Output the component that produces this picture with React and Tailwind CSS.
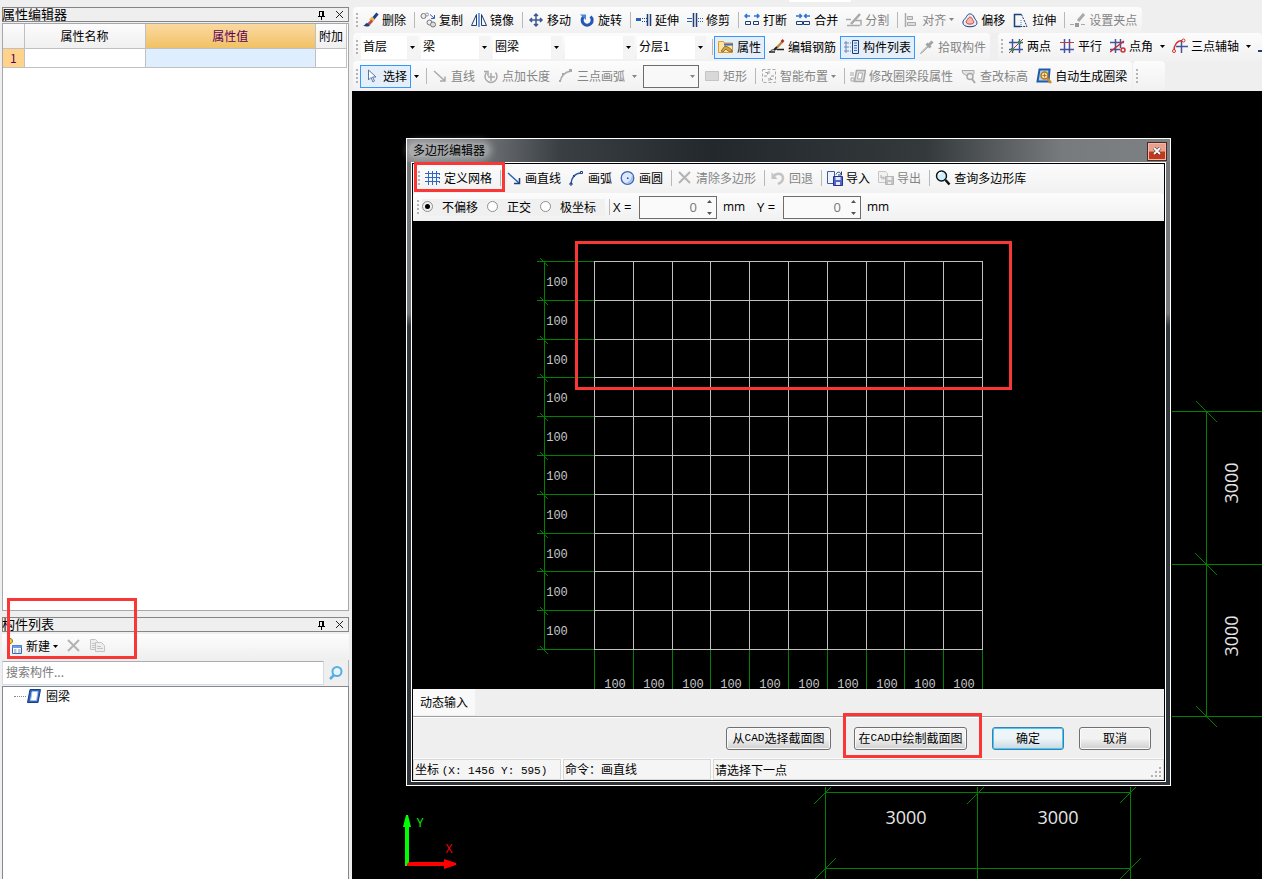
import React from 'react';
import clsx from 'clsx';

const NAVY = '#1f3f77';
const GRAY = '#a9a9a9';

// 16x16 toolbar glyphs
const icons = {
  brush: (
    <>
      <path d="M14.5 1.5l-5 6" stroke="#1f3f8f" strokeWidth="3" />
      <path d="M10.5 6l-3 3" stroke="#e9b64c" strokeWidth="4" />
      <path d="M8.500 7.500L4 11.500l3 1.500 3-3.500z" fill="#c04a4a" />
      <path d="M0 13.500c2 0 2-2 4-2.500l3 2c-1 2-4 2-7 .5z" fill={NAVY} />
    </>
  ),
  copy: (
    <>
      <circle cx="3.500" cy="4" r="2.500" fill="#eee" stroke="#777" />
      <circle cx="7" cy="2.500" r="1.500" stroke="#999" />
      <circle cx="9.500" cy="10.500" r="2.500" fill="#eee" stroke="#777" />
      <circle cx="13" cy="12.500" r="2.500" fill="#ddd" stroke="#777" />
      <path d="M10 2.500l4 3.500M14.500 3v3.500H11" stroke="#2a62b8" />
    </>
  ),
  mirror: (
    <>
      <path d="M5.500 2.500v11h-5zM10.500 2.500v11h5z" stroke={NAVY} />
      <path d="M8 1v14" stroke="#4b7fd0" strokeWidth="1.500" />
    </>
  ),
  move: (
    <path d="M8 2v12M2 8h12M6 4L8 2l2 2M6 12l2 2 2-2M4 6L2 8l2 2M12 6l2 2-2 2" stroke="#3b5a92" strokeWidth="1.500" />
  ),
  rotate: (
    <>
      <path d="M11.500 4.500a5 5 0 1 1-7 .3" stroke="#2457b5" strokeWidth="3" />
      <path d="M1 2.500h6v5.500z" fill="#4b86dd" />
    </>
  ),
  extend: (
    <>
      <path d="M0 7.500h5" stroke="#2a62b8" strokeWidth="3" />
      <path d="M6 6.500h5M6 9.500h5" stroke={NAVY} strokeDasharray="1 1" />
      <path d="M11.500 2v12M14.500 2v12" stroke={NAVY} strokeWidth="1.500" />
    </>
  ),
  trim: (
    <>
      <path d="M0 6.500h5M0 9.500h5" stroke="#2a62b8" />
      <path d="M6.500 1v14M9.500 1v14" stroke={NAVY} strokeWidth="1.500" />
      <path d="M11 6.500h5M11 9.500h5" stroke="#2a62b8" strokeDasharray="1 1" />
    </>
  ),
  breakLine: (
    <>
      <path d="M1 4h5M10 4h5M3 2L1 4l2 2M13 2l2 2-2 2" stroke="#2a72d8" strokeWidth="1.500" />
      <path d="M1.500 9.500h5v3h-5zM9.500 9.500h5v3h-5z" stroke={NAVY} />
    </>
  ),
  merge: (
    <>
      <path d="M1 4h5M10 4h5M4.500 2l2 2-2 2M11.500 2l-2 2 2 2" stroke="#2a72d8" strokeWidth="1.500" />
      <path d="M1.500 9.500h6v3h-6zM8.500 9.500h6v3h-6z" stroke={NAVY} />
    </>
  ),
  split: (
    <>
      <path d="M0 7.500h5M1 13.500h13M9 8.500h6v5" stroke={GRAY} strokeWidth="1.500" />
      <path d="M14 2L5 12" stroke={GRAY} strokeWidth="2.500" />
    </>
  ),
  align: (
    <>
      <path d="M2.500 1v14" stroke={GRAY} strokeWidth="1.500" />
      <path d="M4.500 4.500h5v3h-5zM4.500 10.500h8v3h-8z" fill="#ddd" stroke={GRAY} />
    </>
  ),
  offset: (
    <>
      <path d="M1.500 12.500c-2-4 1.500-5 3-8 2-4 6-3 7.500.5 1 3 4 4 2.500 7.500-2 3-11 3-13 0z" fill="#e7eefb" stroke={NAVY} />
      <path d="M4.500 11c-1-2.500 1-3 2-5 1-1.500 3-1 3.500.5.500 2 2.500 2.500 1.500 4.500-1 1.500-6 1.500-7 0z" fill="#f7b9ae" stroke="#d0453a" />
    </>
  ),
  stretch: (
    <>
      <path d="M8.500 2.500h-7v12h6" stroke={NAVY} strokeWidth="1.500" />
      <path d="M8.500 2.500l5.500 12H7" stroke={NAVY} strokeDasharray="2 1" />
      <path d="M8 8v5" stroke="#3c7fe0" strokeDasharray="1 1" />
    </>
  ),
  grips: (
    <>
      <path d="M0 12.500h4M11 12.500h4" stroke={GRAY} />
      <path d="M14 2L8 9" stroke={GRAY} strokeWidth="3" />
      <path d="M5 11h4v4H5z" fill="#999" />
    </>
  ),
  props: (
    <>
      <path d="M.5 2.500h5l1 1.500h8v9.500H.5z" fill="#fbe3a6" stroke="#e09a2c" />
      <path d="M6 4.500h9v2H6z" fill="#3d6db7" />
      <path d="M3 12l4-5 3 1 4 3v2l-4-1-2-2-3 3z" fill="#d9a23b" stroke="#6b5120" strokeWidth=".7" />
    </>
  ),
  rebar: (
    <>
      <path d="M0 13h6M8 10.500h7" stroke="#222" strokeWidth="1.500" />
      <path d="M1 13c2-4 5-1 7-3" stroke="#222" />
      <path d="M14 2L8 8.500" stroke="#b98a3a" strokeWidth="2.500" />
      <path d="M14.500 1l-2 2" stroke="#b42b2b" strokeWidth="2.500" />
      <path d="M8 8l-3 3" stroke="#222" strokeWidth="2" />
    </>
  ),
  list: (
    <>
      <path d="M1 3h2v2H1zM1 7h2v2H1zM1 11h2v2H1z" stroke="#6d87b5" />
      <path d="M4 4h3M4 8h3M4 12h3" stroke="#6d87b5" strokeDasharray="1 1" />
      <path d="M8.500 1.500h6v13h-6z" fill="#dfe9fa" stroke={NAVY} />
      <path d="M10 4h3M10 6.500h3M10 9h3M10 11.500h3" stroke="#3b6fc4" />
    </>
  ),
  picker: (
    <>
      <path d="M9 6.500L3 12.500l-1.500 2 2-1 6-6z" fill="#e4e4e4" stroke={GRAY} />
      <path d="M7.500 4.500l4 4M9.500 6.500l4-4" stroke="#a3a3a3" strokeWidth="3" />
    </>
  ),
  twoPoint: (
    <>
      <path d="M4.500 1v14M11.500 1v14M1 4.500h14M1 11.500h14" stroke="#44549a" strokeWidth="1.500" />
      <path d="M1 15L15 1" stroke="#b03636" />
      <path d="M3 10h3v3H3zM10 3h3v3h-3z" fill="#3d8a3d" />
    </>
  ),
  parallel: (
    <>
      <path d="M5.500 1v14M10.500 1v14M1 11.500h14" stroke="#44549a" strokeWidth="1.500" />
      <path d="M1 4.500h14" stroke="#c83c3c" />
    </>
  ),
  pointAngle: (
    <>
      <path d="M5.500 1v14M10.500 1v9M0 4.500h14M0 11.500h10" stroke="#44549a" strokeWidth="1.500" />
      <path d="M0 14L14 3" stroke="#d02c2c" strokeWidth="1.500" />
      <circle cx="13" cy="12" r="2" stroke="#d02c2c" strokeWidth="1.500" />
    </>
  ),
  threePoint: (
    <>
      <path d="M9.500 2v13M4 8.500h12" stroke="#44549a" strokeWidth="1.500" />
      <path d="M2 13C2 7 5 2.500 11 2.500" stroke="#d02c2c" strokeWidth="1.500" />
      <circle cx="2" cy="13" r="1.500" fill="#fff" stroke="#d02c2c" />
      <circle cx="11.500" cy="2.500" r="1.500" fill="#fff" stroke="#d02c2c" />
    </>
  ),
  axis: <path d="M0 13h5V8" stroke={NAVY} strokeWidth="2" />,
  cursor: <path d="M4.500 2v10l2.500-2.500L9 14l1.500-1L8.500 9H12z" fill="#fff" stroke="#5c76a5" />,
  line: <path d="M2 3l11 10M13 8.500V13H8" stroke={GRAY} strokeWidth="1.500" />,
  pointLength: (
    <>
      <path d="M3.500 4.500a6 6 0 1 0 9 0" stroke={GRAY} strokeWidth="1.500" />
      <path d="M8 5v8M5 9h7M1 3.500h4V8" stroke={GRAY} strokeWidth="1.500" />
    </>
  ),
  arcGray: (
    <>
      <path d="M2 14C3 8 7 4 13 3" stroke={GRAY} strokeWidth="1.500" />
      <path d="M11 1h3v3h-3zM4 5h2v2H4zM1 12h2v2H1z" fill={GRAY} />
    </>
  ),
  rect: <path d="M1.500 3.500h13v9h-13z" fill="#d8d8d8" stroke="#c4c4c4" />,
  smart: (
    <>
      <path d="M1.500 1.500h13v13h-13z" stroke={GRAY} strokeDasharray="3 2" />
      <path d="M8 3v3M8 10v3M3 8h3M10 8h3M4.500 4.500h2v2M11.500 11.500h-2v-2" stroke="#999" />
    </>
  ),
  modify: (
    <>
      <path d="M6.500 2.500h9l-2 11h-9z" fill="#e4e4e4" stroke={GRAY} strokeWidth="1.500" />
      <path d="M8.500 5h4l-1 6h-4z" fill="#fff" stroke={GRAY} />
      <path d="M1 4v4M3 4v4M1 10h3v3H1z" stroke={GRAY} />
    </>
  ),
  elevation: (
    <>
      <path d="M1 2.500h12v3l-4 4-7-4z" fill="#e4e4e4" stroke={GRAY} />
      <circle cx="9" cy="8.500" r="3" fill="#f1f1f1" stroke={GRAY} strokeWidth="1.500" />
      <path d="M11 11l3 4" stroke={GRAY} strokeWidth="2" />
    </>
  ),
  auto: (
    <>
      <path d="M3.500 1.500h10l-1 12h-11z" fill="#aed3f5" stroke="#1f5ca8" strokeWidth="2" />
      <circle cx="8.500" cy="7.500" r="3.500" fill="#f9e4b5" stroke="#b9761b" strokeWidth="1.500" />
      <path d="M8.500 5.500v4M6.500 7.500h4" stroke="#b9761b" />
      <path d="M11 10l4 5" stroke="#c98a2c" strokeWidth="2.500" />
    </>
  ),
  grid: (
    <path d="M3.500 1v14M7.500 1v14M11.500 1v14M0 3.500h15M0 7.500h15M0 11.500h15M14.500 3v2M14.500 7v2M14.500 11v2" stroke="#2e66c2" />
  ),
  lineBlue: (
    <>
      <path d="M2 3l11 10" stroke="#2a62b8" strokeWidth="1.500" />
      <path d="M13.500 8v5.500H8" stroke={NAVY} strokeWidth="1.500" />
    </>
  ),
  arcBlue: (
    <>
      <path d="M2 14C2 8 6 3 12 3" stroke="#2e55a8" strokeWidth="1.500" />
      <path d="M11.500 1.500h2v2h-2z" fill="#fff" stroke={NAVY} />
      <path d="M4 5l2 2M1 13h2v2H1z" stroke={NAVY} />
    </>
  ),
  circle: (
    <>
      <circle cx="7.500" cy="8" r="6.300" fill="#dbe8fd" stroke="#3f63b5" strokeWidth="1.300" />
      <path d="M12 4a6 6 0 0 1-7 9c4 0 7-4 7-9z" fill="#9dbcf3" />
      <path d="M7 7.500h1.500V9H7z" fill={NAVY} />
    </>
  ),
  cross: <path d="M2 2l11 11M13 2L2 13" stroke="#b3b3b3" strokeWidth="2" />,
  undo: (
    <>
      <path d="M4 5.500c4-3.500 9-1.500 9 2.500s-3 5-5 6" stroke="#c4c4c4" strokeWidth="2.500" />
      <path d="M1.500 2v7h6z" fill="#c4c4c4" />
    </>
  ),
  importFile: (
    <>
      <path d="M.5 1.500h7v12h-7z" fill="#eef3fc" stroke="#3b60a8" />
      <path d="M6.500 6.500h9v9h-9z" fill="#5566c8" stroke="#23338a" />
      <path d="M8.500 7h5v3h-5zM9 12h4v3H9z" fill="#e6ebfb" />
      <path d="M9 4.500c1-3 4-3 5-.5M14.500 1.500V5H11" stroke={NAVY} />
    </>
  ),
  exportFile: (
    <>
      <path d="M.5 1.500h7l2 2v9h-9z" fill="#f1f1f1" stroke="#c6c6c6" />
      <path d="M7.500 6.500h8v8h-8z" fill="#c3c3c3" stroke="#b4b4b4" />
      <path d="M9.500 7h4v3h-4zM10 12h3v2h-3z" fill="#eee" />
      <path d="M3 5v3h3M5 6.500L6.500 8 5 9.500" stroke={GRAY} />
    </>
  ),
  search: (
    <>
      <circle cx="6.500" cy="6" r="5" fill="#cdefff" stroke="#111" strokeWidth="1.400" />
      <path d="M4 5c0-2 2-2.500 3-2.500" stroke="#fff" strokeWidth="1.500" />
      <path d="M10.500 10l4 4.500" stroke="#111" strokeWidth="2.500" />
    </>
  ),
  searchBlue: (
    <>
      <circle cx="9" cy="6.500" r="4.500" fill="#e8f5fd" stroke="#55aee8" strokeWidth="2" />
      <path d="M6 10l-4 4" stroke="#55aee8" strokeWidth="2.500" />
    </>
  ),
  create: (
    <>
      <path d="M3 0v6M0 3h6" stroke="#a2860f" strokeWidth="3" />
      <path d="M3 1v4M1 3h4" stroke="#f4d638" strokeWidth="1.500" />
      <path d="M5.500 7.500h9v8h-9z" fill="#fff" stroke="#3b64ae" />
      <path d="M5.500 7.500h9V10h-9z" fill="#6f9be6" />
      <path d="M7 12h2.500M11 12h2.500M7 14h2.500M11 14h2.500" stroke="#6f86b5" />
    </>
  ),
  pages: (
    <>
      <path d="M1.500 1.500h5l2 2v8h-7zM3 5.500h3M3 7.500h3M3 9.500h3" fill="#eee" stroke="#c4c4c4" />
      <path d="M6.500 4.500h6l3 3v6h-9zM8 8.500h4M8 10.500h6" fill="#eee" stroke="#c4c4c4" />
    </>
  ),
  beam: (
    <>
      <path d="M4 1.500h10.500l-2.500 13H1.500z" fill="#2f62b9" stroke="#173f87" />
      <path d="M6 3.500h6l-1.500 9H4.500z" fill="#fff" stroke="#9dbdf0" />
    </>
  ),
};

const Icon = ({ name }) => (
  <svg viewBox="0 0 16 16" fill="none" className="h-4 w-4 shrink-0" aria-hidden="true">
    {icons[name]}
  </svg>
);

const Caret = () => (
  <svg viewBox="0 0 5 3" className="h-[3px] w-[5px] shrink-0" aria-hidden="true">
    <path d="M0 0h5L2.500 3z" fill="currentColor" />
  </svg>
);

const Grip = () => (
  <div className="mr-px ml-[3px] flex shrink-0 flex-col gap-[2px]">
    <i className="h-[2px] w-[2px] bg-[#b4b4b4]" />
    <i className="h-[2px] w-[2px] bg-[#b4b4b4]" />
    <i className="h-[2px] w-[2px] bg-[#b4b4b4]" />
    <i className="h-[2px] w-[2px] bg-[#b4b4b4]" />
  </div>
);

const Separator = () => <div className="mr-px ml-1 h-4 w-px shrink-0 bg-[#b8b8b8]" />;

// Toolbar button, optionally pressed, greyed out or with a drop-down caret
const Tool = ({ icon, label, active, disabled, caret }) => (
  <button
    type="button"
    disabled={disabled}
    className={clsx(
      'flex h-[23px] shrink-0 items-center border px-[3px] whitespace-nowrap',
      active ? 'border-[#3399ff] bg-[#e5effa]' : 'border-transparent',
      disabled && 'text-[#858585]'
    )}
  >
    <Icon name={icon} />
    <span className="ml-[3px]">{label}</span>
    {caret && <span className="ml-[3px]"><Caret /></span>}
  </button>
);

const CaretButton = ({ label, disabled }) => (
  <button
    type="button"
    aria-label={label}
    disabled={disabled}
    className={clsx('flex h-[23px] w-[11px] shrink-0 items-center justify-center', disabled && 'text-[#858585]')}
  >
    <Caret />
  </button>
);

const Combo = ({ label, value, className }) => (
  <label className={clsx('relative flex shrink-0 items-center', className)}>
    <select aria-label={label} className="h-[23px] w-full appearance-none bg-white pb-[2px] pl-[2px]">
      <option>{value}</option>
    </select>
    <span className="pointer-events-none absolute right-0 flex h-[23px] w-[11px] items-center justify-center bg-[#f4f4f4]">
      <Caret />
    </span>
  </label>
);

const Bar = ({ className, children }) => (
  <div className={clsx('flex items-center rounded-sm bg-linear-to-b from-[#fcfcfc] to-[#f1f1f1]', className)}>
    {children}
  </div>
);

const MainToolbars = () => (
  <header className="overflow-hidden pl-px">
    <div className="h-[7px]">
      <div className="ml-[436px] h-[2px] w-[62px] bg-white" />
    </div>
    <div className="flex h-[26px]">
      <Bar className="pr-px pb-px">
        <Grip />
        <Tool icon="brush" label="删除" />
        <Separator />
        <Tool icon="copy" label="复制" />
        <Tool icon="mirror" label="镜像" />
        <Separator />
        <Tool icon="move" label="移动" />
        <Tool icon="rotate" label="旋转" />
        <Separator />
        <Tool icon="extend" label="延伸" />
        <Tool icon="trim" label="修剪" />
        <Separator />
        <Tool icon="breakLine" label="打断" />
        <Tool icon="merge" label="合并" />
        <Tool icon="split" label="分割" disabled />
        <Separator />
        <Tool icon="align" label="对齐" disabled caret />
        <Tool icon="offset" label="偏移" />
        <Tool icon="stretch" label="拉伸" />
        <Separator />
        <Tool icon="grips" label="设置夹点" disabled />
      </Bar>
    </div>
    <div className="flex h-[28px] gap-2">
      <Bar>
        <Grip />
        <div className="mr-[2px] ml-[2px] flex gap-[3px]">
          <Combo label="楼层" value="首层" className="w-[57px]" />
          <Combo label="构件类别" value="梁" className="w-[69px]" />
          <Combo label="构件类型" value="圈梁" className="w-[69px]" />
          <Combo label="构件" value="" className="w-[69px]" />
          <Combo label="分层" value="分层1" className="w-[69px]" />
        </div>
        <Separator />
        <Tool icon="props" label="属性" active />
        <Tool icon="rebar" label="编辑钢筋" />
        <Tool icon="list" label="构件列表" active />
        <Tool icon="picker" label="拾取构件" disabled />
      </Bar>
      <Bar className="flex-1 overflow-hidden pb-[2px]">
        <Grip />
        <Tool icon="twoPoint" label="两点" />
        <Tool icon="parallel" label="平行" />
        <Tool icon="pointAngle" label="点角" />
        <CaretButton label="点角选项" />
        <Tool icon="threePoint" label="三点辅轴" />
        <CaretButton label="三点辅轴选项" />
        <Tool icon="axis" label="" />
      </Bar>
    </div>
    <div className="flex h-[30px]">
      <Bar className="pr-px">
        <Grip />
        <div className="ml-px flex">
          <Tool icon="cursor" label="选择" active />
        </div>
        <CaretButton label="选择选项" />
        <Separator />
        <Tool icon="line" label="直线" disabled />
        <Tool icon="pointLength" label="点加长度" disabled />
        <Tool icon="arcGray" label="三点画弧" disabled />
        <CaretButton label="三点画弧选项" disabled />
        <label className="relative mr-px ml-[3px] flex w-[56px] items-center text-[#858585]">
          <select aria-label="绘制方式" disabled className="h-[23px] w-full appearance-none border border-[#6d6d6d] bg-[#f8f8f8]" />
          <span className="pointer-events-none absolute right-1"><Caret /></span>
        </label>
        <Tool icon="rect" label="矩形" disabled />
        <Separator />
        <Tool icon="smart" label="智能布置" disabled caret />
        <Separator />
        <Tool icon="modify" label="修改圈梁段属性" disabled />
        <Tool icon="elevation" label="查改标高" disabled />
        <Tool icon="auto" label="自动生成圈梁" />
      </Bar>
      <Bar className="ml-px w-[32px]">
        <Grip />
      </Bar>
    </div>
  </header>
);

const PanelTitle = ({ children }) => (
  <div className="flex h-[15px] items-center justify-between border border-[#858585] bg-[#efefef] pr-1">
    <h2 className="-ml-px pb-[2px] text-[13px] leading-[13px]">{children}</h2>
    <div className="flex items-center gap-[9px]">
      <button type="button" aria-label="固定">
        <svg viewBox="0 0 9 10" className="h-[10px] w-[9px]" fill="none" shapeRendering="crispEdges">
          <path d="M2.500 1v5M2 1.500h4M1 6.500h7M4.500 7v3" stroke="#000" />
          <path d="M5 1h2v5H5z" fill="#000" />
        </svg>
      </button>
      <button type="button" aria-label="关闭">
        <svg viewBox="0 0 9 9" className="h-[9px] w-[9px]" fill="none">
          <path d="M1 1l7 7M8 1L1 8" stroke="#222" />
        </svg>
      </button>
    </div>
  </div>
);

const Highlight = ({ className }) => (
  <div className={clsx('pointer-events-none absolute border-3 border-[#fa3737]', className)} />
);

const PropertyEditor = () => (
  <section className="flex flex-1 flex-col">
    <PanelTitle>属性编辑器</PanelTitle>
    <div className="mt-px flex-1 border border-[#a5a8ad] bg-white pr-px">
      <table className="w-full table-fixed border-collapse text-center">
        <colgroup>
          <col className="w-[21px]" />
          <col className="w-[121px]" />
          <col />
          <col className="w-[31px]" />
        </colgroup>
        <thead>
          <tr className="h-6 bg-linear-to-b from-[#fcfcfc] to-[#f0f0f0]">
            <th aria-label="序号" className="border-r border-b border-[#c0c0c0]" />
            <th className="border-r border-b border-[#c0c0c0] font-normal">属性名称</th>
            <th className="border-r border-b border-[#c0c0c0] bg-linear-to-b from-[#fad9a0] to-[#f1c163] font-normal text-[#5c005c]">属性值</th>
            <th className="border-r border-b border-[#c0c0c0] font-normal whitespace-nowrap">附加</th>
          </tr>
        </thead>
        <tbody>
          <tr className="h-[19px]">
            <td className="border-r border-b border-[#c0c0c0] bg-[#ffd48a] leading-[14px] text-[#5c005c]">1</td>
            <td className="border-r border-b border-[#c0c0c0]" />
            <td className="border-r border-b border-[#c0c0c0] bg-[#dfeefe]" />
            <td className="border-r border-b border-[#c0c0c0]" />
          </tr>
        </tbody>
      </table>
    </div>
  </section>
);

const ComponentList = () => (
  <section className="relative mt-[6px] flex h-[262px] flex-col">
    <PanelTitle>构件列表</PanelTitle>
    <div className="mt-[2px] flex h-[26px] items-center bg-linear-to-b from-[#fdfdfd] to-[#efefef] pb-[2px] pl-px">
      <Tool icon="create" label="新建" caret />
      <button type="button" aria-label="删除" disabled className="px-1"><Icon name="cross" /></button>
      <button type="button" aria-label="复制" disabled className="px-[3px]"><Icon name="pages" /></button>
    </div>
    <div className="flex h-[26px] items-center border-r border-[#b5b5b5]">
      <input
        aria-label="搜索构件"
        placeholder="搜索构件..."
        className="h-6 min-w-0 flex-1 border border-[#d5dce4] border-t-[#a9adb3] bg-white pb-1 pl-[3px] placeholder:text-[#7a7a7a]"
      />
      <button type="button" aria-label="搜索" className="flex h-6 w-6 items-center justify-center"><Icon name="searchBlue" /></button>
    </div>
    <ul className="flex-1 border border-b-0 border-[#828790] bg-white">
      <li className="flex h-[18px] items-center pl-[11px]">
        <span className="w-3 border-t border-dotted border-[#888]" />
        <Icon name="beam" />
        <span className="ml-1">圈梁</span>
      </li>
    </ul>
    <Highlight className="top-[-19px] left-[5px] h-[61px] w-[130px]" />
  </section>
);

const DimensionText = ({ x, y, vertical }) => (
  <text
    x={x}
    y={y}
    transform={vertical ? `rotate(-90 ${x} ${y})` : undefined}
    textAnchor="middle"
    dominantBaseline="central"
    className="fill-[#e6e6e6] font-['Open_Sans',sans-serif] text-[18px]"
  >
    3000
  </text>
);

// Model space behind the dialog: axis dimensions and the UCS marker
const ModelSpace = () => (
  <svg className="absolute inset-0 h-full w-full" aria-label="绘图区">
    <g transform="translate(-352 -91)">
      <g stroke="#008000" fill="none" shapeRendering="crispEdges">
        <path d="M1172 411.500h2000M1172 564.500h2000M1172 716.500h2000M1206.500 411v306" />
        <path d="M1196 401l21 21M1195 553l22 22M1196 706l21 21" />
        <path d="M825.500 787v200M977.500 787v200M1130.500 787v200M825 792.500h306M825 868.500h306" />
        <path d="M831 787l-17 17M984 787l-17 17M1136 787l-16 16M836 858l-21 21M1141 858l-21 21" />
      </g>
      <DimensionText x={1231} y={483} vertical />
      <DimensionText x={1231} y={636} vertical />
      <DimensionText x={906} y={817} />
      <DimensionText x={1058} y={817} />
      <path d="M405 866v-39h-2l3-12h2l3 12h-2v39z" fill="#00ff00" />
      <path d="M409 862h35v-3l12 4v2l-12 4v-3h-37v-2z" fill="#ff0000" />
      <text x="420" y="827" textAnchor="middle" className="fill-[#00ff00] font-['Open_Sans',sans-serif] text-[12px]">Y</text>
      <text x="449" y="853" textAnchor="middle" className="fill-[#ff0000] font-['Open_Sans',sans-serif] text-[12px]">X</text>
    </g>
  </svg>
);

const STEPS = Array.from({ length: 11 }, (_, i) => Math.round(i * 38.8));

// 10 x 10 section grid with 100mm dimensions along the left and bottom
const SectionGrid = () => (
  <div className="bg-black">
    <svg className="block h-[468px] w-full overflow-visible" aria-label="多边形画布">
      <g transform="translate(181 41)">
        <g shapeRendering="crispEdges" fill="none">
          <g stroke="#008000">
            {STEPS.map((s) => (
              <path key={s} d={`M-57 ${s - 0.5}H0M${s + 0.5} 388V427M-54 ${s - 4}l8 8`} />
            ))}
            <path d="M-49.500 0V388" />
          </g>
          {STEPS.map((s) => (
            <path key={s} d={`M0 ${s - 0.5}H389M${s + 0.5} 0V388`} stroke="#c0c0c0" />
          ))}
        </g>
        <g className="fill-[#c8c8c8] font-['Liberation_Mono',monospace] text-[12px]" textAnchor="middle">
          {STEPS.slice(0, 10).map((s) => (
            <React.Fragment key={s}>
              <text x={-37} y={s + 24}>100</text>
              <text x={s + 21} y={426}>100</text>
            </React.Fragment>
          ))}
        </g>
        <rect x="-17.500" y="-19.500" width="434" height="146" fill="none" stroke="#fa3737" strokeWidth="3" />
      </g>
    </svg>
  </div>
);

const Radio = ({ label, defaultChecked }) => (
  <label className="flex items-center gap-[9px]">
    <input
      type="radio"
      name="offset"
      defaultChecked={defaultChecked}
      className="h-[11px] w-[11px] appearance-none rounded-full border border-[#8e8f8f] bg-white p-[2px] checked:bg-black checked:bg-clip-content"
    />
    {label}
  </label>
);

const OffsetField = ({ axis }) => (
  <label className="flex items-center font-['Open_Sans',sans-serif]">
    <span className="w-[26px] text-[13px]">{axis} =</span>
    <span className="flex h-[23px] w-[78px] items-center border border-[#6d6d6d] bg-[#fafafa] pr-1 text-[#777]">
      <input type="text" defaultValue="0" className="w-full min-w-0 pr-[10px] text-right text-[13px]" />
      <svg viewBox="0 0 5 15" className="h-[15px] w-[5px] shrink-0" aria-hidden="true">
        <path d="M0 3h5L2.500 0zM0 12h5l-2.500 3z" fill="#555" />
      </svg>
    </span>
    <span className="ml-[6px] w-[34px]">mm</span>
  </label>
);

const Mono = ({ children }) => (
  <span className="font-['Liberation_Mono',monospace] text-[11px]">{children}</span>
);

const DialogButton = ({ primary, className, children }) => (
  <button
    type="button"
    className={clsx(
      'flex h-[23px] items-center justify-center rounded-[3px] border bg-linear-to-b pb-px whitespace-nowrap',
      primary
        ? 'border-[#3c7fb1] from-[#eef5f8] from-50% to-[#c7d9e2] inset-ring inset-ring-[#48c8f4]'
        : 'border-[#707070] from-[#f2f2f2] from-50% to-[#cfcfcf] inset-ring inset-ring-[#fafafa]',
      className
    )}
  >
    {children}
  </button>
);

const PolygonDialog = () => (
  <div
    role="dialog"
    aria-labelledby="dialog-title"
    className="absolute top-[47px] left-[54px] w-[765px] border border-white bg-linear-to-b from-[#73777a] from-27% to-[#30353b] to-29%"
  >
    <div className="flex h-[23px] items-center justify-between bg-[linear-gradient(to_right,#85888b,#73777a_9%,#3a3f43_20%,#23282c_40%,#34393c_68%,#777b7e_86%,#7d8184)] pr-1 pl-[2px]">
      <h1 id="dialog-title" className="mb-[2px] rounded-full bg-white/30 px-1 leading-[14px] shadow-[0_0_6px_3px_rgba(255,255,255,0.3)]">多边形编辑器</h1>
      <button type="button" aria-label="关闭" className="mt-px flex h-[17px] w-[18px] items-center justify-center border border-[#f1b8a6] bg-linear-to-b from-[#e9a08c] from-45% to-[#c0391c] to-55% outline outline-[#4a2a24]">
        <svg viewBox="0 0 8 8" className="h-2 w-2" fill="none">
          <path d="M1 1l6 6M7 1L1 7" stroke="#333" strokeWidth="3" />
          <path d="M1 1l6 6M7 1L1 7" stroke="#fff" strokeWidth="1.800" />
        </svg>
      </button>
    </div>
    <div className="mx-1 mb-[3px] border border-white">
      <div className="border border-black bg-[#efefef]">
        <Bar className="relative h-[29px] pb-px">
          <div className="ml-[2px] flex items-center"><Grip /></div>
          <Tool icon="grid" label="定义网格" />
          <Separator />
          <Tool icon="lineBlue" label="画直线" />
          <Tool icon="arcBlue" label="画弧" />
          <Tool icon="circle" label="画圆" />
          <Separator />
          <Tool icon="cross" label="清除多边形" disabled />
          <Separator />
          <Tool icon="undo" label="回退" disabled />
          <Separator />
          <Tool icon="importFile" label="导入" />
          <Tool icon="exportFile" label="导出" disabled />
          <Separator />
          <Tool icon="search" label="查询多边形库" />
          <Highlight className="top-[-2px] left-px h-[30px] w-[91px]" />
        </Bar>
        <Bar className="h-[28px]">
          <div className="ml-px flex items-center"><Grip /></div>
          <fieldset className="ml-[2px] flex w-[183px] items-center gap-[9px] bg-[#f0f0f0] pb-px">
            <Radio label="不偏移" defaultChecked />
            <Radio label="正交" />
            <Radio label="极坐标" />
          </fieldset>
          <Separator />
          <div className="ml-[2px] flex">
            <OffsetField axis="X" />
            <OffsetField axis="Y" />
          </div>
        </Bar>
        <SectionGrid />
        <div className="h-[28px] border-b border-[#a0a0a0]">
          <button type="button" className="h-[26px] bg-[#f9f9f9] px-[7px]">动态输入</button>
        </div>
        <div className="flex h-[41px] items-center justify-end border-t border-white pr-[13px]">
          <DialogButton className="w-[105px]">从<Mono>CAD</Mono>选择截面图</DialogButton>
          <div className="relative mr-[25px] ml-[23px]">
            <DialogButton className="w-[113px]">在<Mono>CAD</Mono>中绘制截面图</DialogButton>
            <Highlight className="top-[-14px] left-[-11px] h-[45px] w-[139px]" />
          </div>
          <DialogButton primary className="mr-[15px] w-[72px]">确定</DialogButton>
          <DialogButton className="w-[72px]">取消</DialogButton>
        </div>
        <footer className="flex h-[22px] gap-[2px] bg-[#fafafa] pt-px">
          <div className="w-[148px] border border-[#d7d7d7] bg-[#f5f5f5] pl-px leading-[18px]">
            坐标 <Mono>(X: 1456 Y: 595)</Mono>
          </div>
          <div className="w-[148px] border border-[#d7d7d7] bg-[#f5f5f5] pl-px leading-[18px]">命令：画直线</div>
          <div className="flex flex-1 items-end justify-between border border-[#d7d7d7] bg-[#f5f5f5] pl-px leading-[18px]">
            请选择下一点
            <svg viewBox="0 0 11 11" className="mr-px mb-px h-[11px] w-[11px]" aria-hidden="true">
              <path d="M8 0h2v2H8zM4 4h2v2H4zM8 4h2v2H8zM0 8h2v2H0zM4 8h2v2H4zM8 8h2v2H8z" fill="#b5b5b5" />
            </svg>
          </div>
        </footer>
      </div>
    </div>
  </div>
);

const App = () => (
  <div className="flex h-screen overflow-hidden bg-[#efefef] font-['Noto_Sans_CJK_SC',sans-serif] text-[12px] leading-4 text-black">
    <aside className="flex w-[352px] shrink-0 flex-col pt-[7px] pr-[3px] pl-[2px]">
      <PropertyEditor />
      <ComponentList />
    </aside>
    <div className="flex min-w-0 flex-1 flex-col">
      <MainToolbars />
      <main className="relative flex-1 overflow-hidden bg-black">
        <ModelSpace />
        <PolygonDialog />
      </main>
    </div>
  </div>
);

export default App;
